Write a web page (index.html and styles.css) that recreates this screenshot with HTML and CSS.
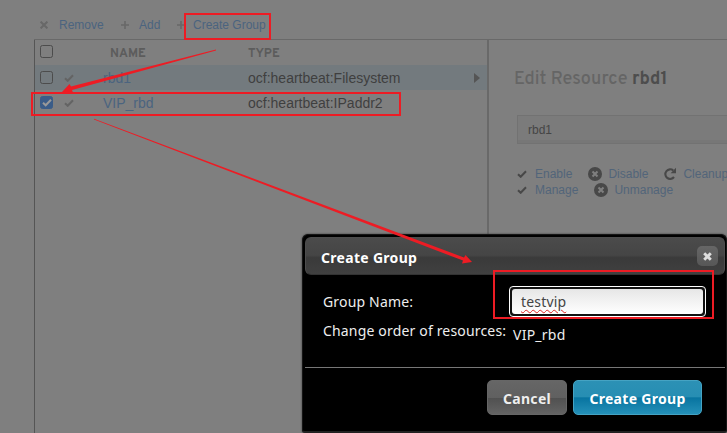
FILE: index.html
```html
<!DOCTYPE html>
<html lang="en">
<head>
<meta charset="utf-8">
<title>Resources</title>
<link rel="stylesheet" href="styles.css">
</head>
<body>
<svg class="defs" width="0" height="0">
  <symbol id="check" viewBox="0 0 10 8"><path d="M1 4.2 3.7 6.8 9 1.3" fill="none" stroke="currentColor" stroke-width="2"/></symbol>
  <symbol id="plus" viewBox="0 0 8 8"><path d="M4 0v8M0 4h8" stroke="currentColor" stroke-width="1.6"/></symbol>
  <symbol id="cross" viewBox="0 0 8 8"><path d="M.6.6 7.4 7.4M7.4.6.6 7.4" stroke="currentColor" stroke-width="2"/></symbol>
  <symbol id="boldx" viewBox="0 0 9 9"><path d="m1.200 1.200 6.600 6.600m0-6.600-6.600 6.600" stroke="currentColor" stroke-width="2.900"/></symbol>
  <symbol id="circlex" viewBox="0 0 14 14"><circle cx="7" cy="7" r="7" fill="currentColor"/><path d="m4.5 4.5 5 5m0-5-5 5" stroke="#7f7f7f" stroke-width="2.1"/></symbol>
  <symbol id="reload" viewBox="0 0 14 14"><path d="M10.3 3.5A4.8 4.8 0 1 0 11 10" fill="none" stroke="currentColor" stroke-width="2.1"/><path d="M13 .8v5.5H7.6z" fill="currentColor"/></symbol>
</svg>
<div class="page">
  <nav class="toolbar">
    <a class="remove"><svg><use href="#cross"/></svg>Remove</a>
    <a class="add"><svg><use href="#plus"/></svg>Add</a>
    <a class="group"><svg><use href="#plus"/></svg>Create Group</a>
  </nav>
  <div class="columns">
    <section class="list">
      <div class="row head"><i class="box"></i><span></span><b class="name">NAME</b><b class="type">TYPE</b></div>
      <div class="row active"><i class="box"></i><svg class="tick"><use href="#check"/></svg><a>rbd1</a><span>ocf:heartbeat:Filesystem</span><i class="caret"></i></div>
      <div class="row"><i class="box on"><svg><use href="#check"/></svg></i><svg class="tick"><use href="#check"/></svg><a>VIP_rbd</a><span>ocf:heartbeat:IPaddr2</span></div>
    </section>
    <section class="detail">
      <h1><span>Edit Resource</span> <b>rbd1</b></h1>
      <div class="bar">rbd1</div>
      <div class="actions">
        <a><svg class="tick"><use href="#check"/></svg>Enable</a>
        <a class="disable"><svg class="round"><use href="#circlex"/></svg>Disable</a>
        <a class="cleanup"><svg class="round"><use href="#reload"/></svg>Cleanup</a>
      </div>
      <div class="actions">
        <a><svg class="tick"><use href="#check"/></svg>Manage</a>
        <a class="unmanage"><svg class="round"><use href="#circlex"/></svg>Unmanage</a>
      </div>
    </section>
  </div>
</div>
<div class="dialog">
  <header><span class="title">Create Group</span><span class="close"><svg><use href="#boldx"/></svg></span></header>
  <div class="form">
    <div class="field"><label class="gname">Group Name:</label><div class="input"><span>testvip</span></div></div>
    <div class="order"><span class="change">Change order of resources:</span><span class="vip">VIP_rbd</span></div>
  </div>
  <footer><span class="btn cancel">Cancel</span><span class="btn create">Create Group</span></footer>
</div>
<svg class="marks" width="727" height="433" viewBox="0 0 727 433">
  <g fill="none" stroke="#ed1c24" stroke-width="2">
    <path d="M185 14h85v25h-85zM32 93h368v22H32zM494 271h219v47H494z"/>
  </g>
  <g fill="#ed1c24">
    <path d="M216 49.6 71 86.6 69.5 84 61.500 92.500 73 92.500 72 90 216 50.400z"/>
    <path d="M94 118.700 464 257.500 465.500 255 472 262 462 263.400 463 260.600 94 119.500z"/>
  </g>
</svg>
</body>
</html>
```
FILE: styles.css
```css
* { box-sizing: border-box; }
body { margin: 0; width: 727px; height: 433px; overflow: hidden; background: #7f7f7f; font-family: "Liberation Sans", sans-serif; }
.defs { position: absolute; }
svg { display: block; flex: none; }
.page { height: 433px; display: flex; flex-direction: column; color: #3f3f3f; }
a { color: #4b647f; }
.toolbar { display: flex; height: 39px; padding: 15px 0 4px 40px; font-size: 12px; line-height: 20px; }
.toolbar a { display: flex; align-items: center; white-space: nowrap; }
.toolbar svg { width: 8px; height: 8px; color: #686868; }
.remove { width: 81px; gap: 11px; }
.add { width: 56px; gap: 10px; }
.group { gap: 8px; }
.columns { display: flex; flex: 1; margin-left: 34px; border-top: 1px solid #696969; }
.list { width: 455px; border-left: 1px solid #555; border-right: 2px solid #696969; }
.row { display: grid; grid-template-columns: 24px 39px 145px 226px 10px; align-items: center; height: 25px; padding-left: 5px; font-size: 14px; }
.row > a, .row > span { line-height: 24px; white-space: nowrap; }
.head { height: 25px; font-family: Overpass, Roboto, sans-serif; font-size: 12.5px; color: #5c5c5c; letter-spacing: .1px; }
.head .name { padding-left: 7px; }
.head b { padding-top: 2px; }
.active { background: #737a7e; }
.box { width: 13px; height: 13px; border: 1px solid #4c4c4c; border-radius: 2.5px; }
.head .box { margin-top: -2px; }
.box.on { background: #3a5c88; border-color: #3a5c88; color: #999; }
.box.on svg { width: 10px; height: 9px; margin: 1px 0 0 1px; }
.tick { width: 10px; height: 8px; color: #646464; }
.caret { border-left: 6px solid #555; border-top: 5px solid transparent; border-bottom: 5px solid transparent; width: 6px; height: 10px; }
.detail { flex: 1; padding: 27px 0 0 25px; overflow: hidden; }
h1 { margin: 0; height: 24px; line-height: 26px; font-family: Overpass, Roboto, sans-serif; font-size: 18px; letter-spacing: .08px; font-weight: 500; color: #656565; white-space: nowrap; }
h1 b { color: #4d4d4d; }
.bar { margin: 24px 0 22px 3px; height: 29px; border: 1px solid #727272; border-right: 0; box-shadow: inset 0 -3px #777; padding-left: 10px; font-size: 12px; line-height: 28px; background: #7b7b7b; color: #454545; }
.actions { display: flex; height: 16px; padding-left: 3px; font-size: 12px; line-height: 16px; }
.actions a { display: flex; align-items: center; white-space: nowrap; color: #52657a; }
.actions .tick { color: #484848; margin-right: 8px; }
.round { width: 14px; height: 14px; color: #484848; margin-right: 6px; }
.disable { margin-left: 16px; }
.cleanup { margin-left: 15px; }
.unmanage { margin-left: 16px; }
.dialog { position: absolute; left: 302px; top: 234px; width: 425px; height: 199px; padding: 2px 0 0 2px; border: 1px solid #151515; border-bottom: 2px solid #222; border-radius: 6px 6px 3px 3px; background: #000; box-shadow: 0 0 2px #333; color: #eee; font-family: "Noto Sans", "Open Sans", sans-serif; font-size: 14px; }
.dialog header { display: flex; justify-content: space-between; align-items: center; width: 420px; height: 38px; padding: 0 6px 0 15px; border: 1px solid #4d4d4d; border-bottom-color: #333; border-radius: 6px; background: linear-gradient(#4b4b4b, #454545 48%, #3a3a3a 55%, #404040); color: #fff; font-weight: 700; }
.title { letter-spacing: .3px; padding-top: 2px; }
.close { display: flex; align-items: center; justify-content: center; width: 21px; height: 20px; border-radius: 5px; background: linear-gradient(#666, #575757); }
.close svg { width: 9px; height: 9px; color: #ddd; }
.form { height: 93px; padding: 11px 0 0 18px; border-bottom: 1px solid #777; width: 420px; letter-spacing: .17px; }
.field { display: flex; height: 31px; }
.gname { width: 186px; line-height: 32px; white-space: nowrap; }
.input { width: 197px; height: 31px; border: 1.5px solid #fff; border-radius: 4px; padding: 2px; background: #111; }
.input span { display: block; height: 25px; padding-left: 9px; line-height: 26px; border-radius: 3px; background: linear-gradient(#e6e6e6, #fff); color: #444; text-decoration: underline wavy #d22 1px; text-underline-offset: 2px; }
.order { display: flex; line-height: 20px; padding-top: 4px; white-space: nowrap; }
.change { width: 190px; }
.vip { padding-top: 4px; letter-spacing: .25px; }
.dialog footer { display: flex; justify-content: flex-end; gap: 6px; padding: 12px 24px 0 0; letter-spacing: .3px; }
.btn { height: 35px; border-radius: 5px; text-align: center; line-height: 35px; font-weight: 700; white-space: nowrap; }
.cancel { width: 80px; background: linear-gradient(#666, #606060 50%, #505050 51%, #636363); border: 1px solid #666; }
.create { width: 129px; background: linear-gradient(#2c91b5, #278eb3 48%, #0874a0 51%, #2490b8); border: 1px solid #45a3c3; color: #fff; }
.marks { position: absolute; left: 0; top: 0; }
```
